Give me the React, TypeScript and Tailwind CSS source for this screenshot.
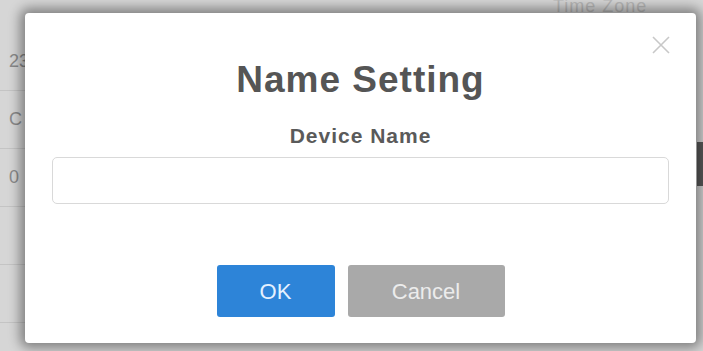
import React from 'react';

const font = { fontFamily: '"Liberation Sans", Arial, sans-serif' };

function BackgroundPage() {
  const rows = ['23', 'C', '0', '', ''];
  return (
    <div className="absolute inset-0 bg-[#d6d6d6]">
      <div className="absolute left-[553px] top-[-7px] text-[18px] tracking-[1px] text-[#b8b8b8]">Time Zone</div>
      <div className="flex flex-col pt-[33px] w-[30px]">
        {rows.map((r, i) => (
          <div
            key={i}
            className="h-[58px] flex items-center border-b border-[#c4c4c4] text-[18px] text-[#8a8a8a] pl-[9px]"
          >
            {r}
          </div>
        ))}
      </div>
      <div className="absolute right-0 top-[142px] w-[6px] h-[44px] bg-[#5a5a5a]" />
    </div>
  );
}

export default function App() {
  return (
    <div className="relative w-[703px] h-[351px] overflow-hidden" style={font}>
      <BackgroundPage />
      <div className="absolute left-[25px] top-[13px] w-[671px] h-[330px] bg-white rounded-[4px] shadow-[0_0_12px_5px_rgba(0,0,0,0.4)] flex flex-col items-center">
        <button className="absolute right-[25px] top-[22px] text-[#c8c8c8]">
          <svg width="20" height="20" viewBox="0 0 20 20" fill="none" stroke="currentColor" strokeWidth="1.6">
            <path d="M2 2 L18 18 M18 2 L2 18" />
          </svg>
        </button>
        <h1 className="mt-[46px] text-[37px] leading-[42px] tracking-[1px] font-bold text-[#555555]">Name Setting</h1>
        <div className="mt-[23px] text-[21px] leading-[24px] tracking-[1px] font-bold text-[#5a5a5a]">Device Name</div>
        <div className="self-stretch px-[27px] mt-[9px]">
          <input className="w-full h-[47px] border border-[#d9d9d9] rounded-[5px] outline-none" />
        </div>
        <div className="mt-[61px] flex gap-[13px]">
          <button className="w-[118px] h-[52px] rounded-[3px] bg-[#2d84d8] text-[#e4f1ff] text-[22px]">OK</button>
          <button className="w-[157px] h-[52px] rounded-[3px] bg-[#a9a9a9] text-[#ececec] text-[22px]">Cancel</button>
        </div>
      </div>
    </div>
  );
}
